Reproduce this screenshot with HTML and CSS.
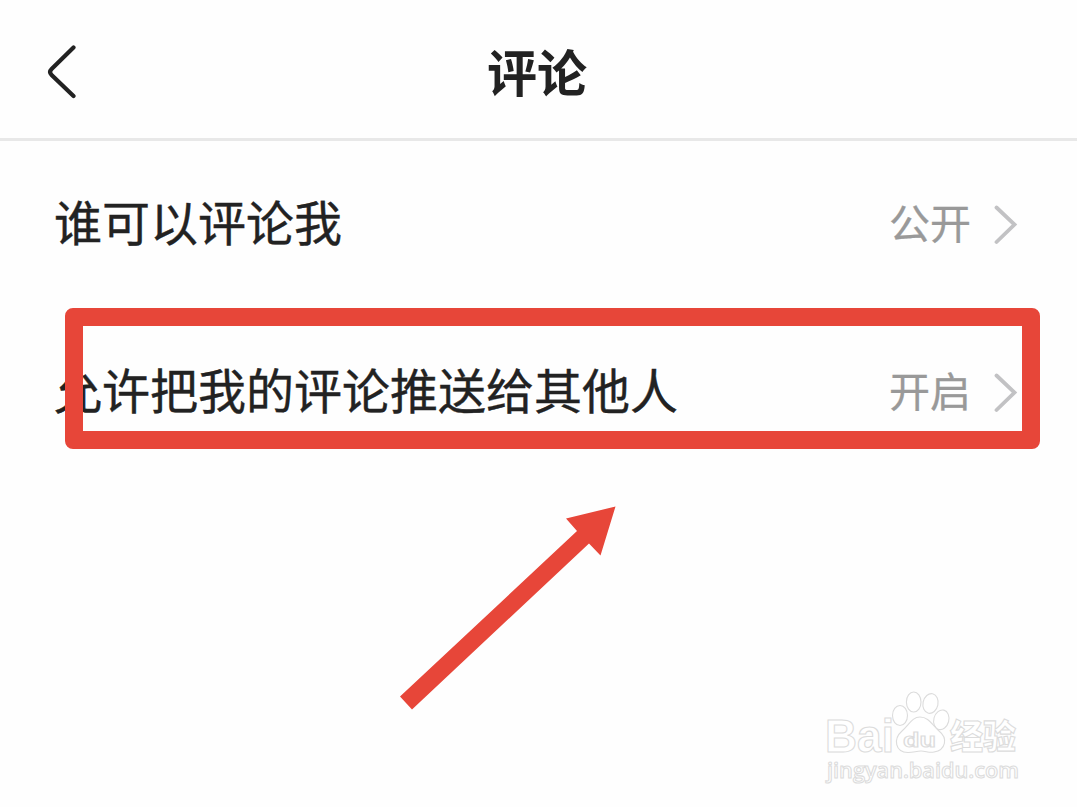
FILE: index.html
```html
<!DOCTYPE html>
<html lang="zh-CN">
<head>
    <meta charset="UTF-8">
    <meta name="viewport" content="width=device-width, initial-scale=1.0">
    <title>评论</title>
    <link rel="stylesheet" href="styles.css">
</head>
<body>
<div class="wrapper">
    <header>
        <svg class="back" width="32" height="58" viewBox="0 0 32 58">
            <path d="M27.5 4.5 L5.6 26 Q2.6 29 5.6 32 L27.5 53"/>
        </svg>
        <h1>评论</h1>
    </header>
    <ul class="setting-list">
        <li>
            <span class="label">谁可以评论我</span>
            <span class="value">公开</span>
            <svg class="more" width="24" height="40" viewBox="0 0 24 40">
                <path d="M2.5 2.5 L20.5 19.5 L2.5 37"/>
            </svg>
        </li>
        <li>
            <span class="label">允许把我的评论推送给其他人</span>
            <span class="value">开启</span>
            <svg class="more" width="24" height="40" viewBox="0 0 24 40">
                <path d="M2.5 2.5 L20.5 19.5 L2.5 37"/>
            </svg>
            <div class="mark-box"></div>
        </li>
    </ul>
    <!-- 箭头 -->
    <svg class="mark-arrow" width="216" height="204" viewBox="0 0 216 204">
        <path d="M215.5 0.5 L200.5 49.5 L189 37.5 L12 203.5 L0 190.5 L177 25 L166 12.5 Z"/>
    </svg>
    <!-- 水印 -->
    <svg class="watermark" width="210" height="110" viewBox="820 688 210 110">
        <text class="logo" x="825" y="752" textLength="69" lengthAdjust="spacingAndGlyphs">Bai</text>
        <ellipse cx="900" cy="715.5" rx="7.5" ry="10"/>
        <ellipse cx="913.7" cy="702" rx="7.3" ry="10"/>
        <ellipse cx="930.5" cy="703.5" rx="7.5" ry="10" transform="rotate(12 930.5 703.5)"/>
        <ellipse cx="941.3" cy="719.8" rx="7.5" ry="10" transform="rotate(15 941.3 719.8)"/>
        <path d="M920 717 C912 717 909 725 902 731 C893 739 895 752 908 752.5 C914 752.5 916 751 921 751 C926 751 929 753 934 752 C946 750 948 738 939 731 C932 725 929 717 920 717 Z"/>
        <text class="du" x="903" y="747" textLength="33" lengthAdjust="spacingAndGlyphs">du</text>
        <text class="cn" x="950" y="749" textLength="66" lengthAdjust="spacingAndGlyphs">经验</text>
        <text class="site" x="827" y="777.5" textLength="192" lengthAdjust="spacingAndGlyphs">jingyan.baidu.com</text>
    </svg>
</div>
</body>
</html>
```

FILE: styles.css
```css
*{
    box-sizing: border-box;
}
body{
    margin: 0;
    background-color: #fefefe;
    color: #222;
    font-family: "Noto Sans CJK SC", sans-serif;
}
.wrapper{
    position: relative;
    height: 807px;
    overflow: hidden;
}
header{
    display: grid;
    grid-template-columns: 32px 1fr 32px;
    align-items: center;
    height: 141px;
    padding: 5px 47px 0 46px;
    border-bottom: 3px solid #e8e8e8;
}
h1{
    margin: 0;
    padding-right: 2px;
    padding-bottom: 3px;
    font-size: 50px;
    font-weight: 700;
    line-height: 60px;
    text-align: center;
}
svg{
    display: block;
    fill: none;
}
.back{
    stroke: #222;
    stroke-width: 4.2;
    stroke-linecap: round;
}
.setting-list{
    list-style: none;
    margin: 0;
    padding: 0;
}
.setting-list li{
    position: relative;
    display: flex;
    align-items: center;
    height: 168px;
    padding: 0 59px 0 54px;
}
.label{
    flex: 1;
    padding-bottom: 11px;
    font-size: 48px;
    line-height: 70px;
    white-space: nowrap;
    -webkit-text-stroke: 0.4px #222;
}
.value{
    margin-right: 23px;
    padding-bottom: 9px;
    color: #999;
    font-size: 41px;
    line-height: 60px;
    -webkit-text-stroke: 0.3px #999;
}
.more{
    stroke: #c2c2c4;
    stroke-width: 3.8;
    stroke-linecap: round;
}
/*红框*/
.mark-box{
    position: absolute;
    left: 65px;
    top: -1px;
    width: 975px;
    height: 141px;
    border: 18px solid #e74639;
    border-radius: 8px;
}
.mark-arrow{
    position: absolute;
    left: 400px;
    top: 506px;
    fill: #e74639;
}
/*水印样式*/
.watermark{
    position: absolute;
    left: 820px;
    top: 688px;
    fill: #fff;
    stroke: #dcdcdc;
    stroke-width: 1.1;
}
.logo{
    font: bold 46px "Liberation Sans", sans-serif;
}
.du{
    font: bold 21px "Liberation Sans", sans-serif;
}
.cn{
    font: 900 34px "Noto Sans CJK SC", sans-serif;
}
.site{
    font: 600 22px "Open Sans", sans-serif;
}
```
